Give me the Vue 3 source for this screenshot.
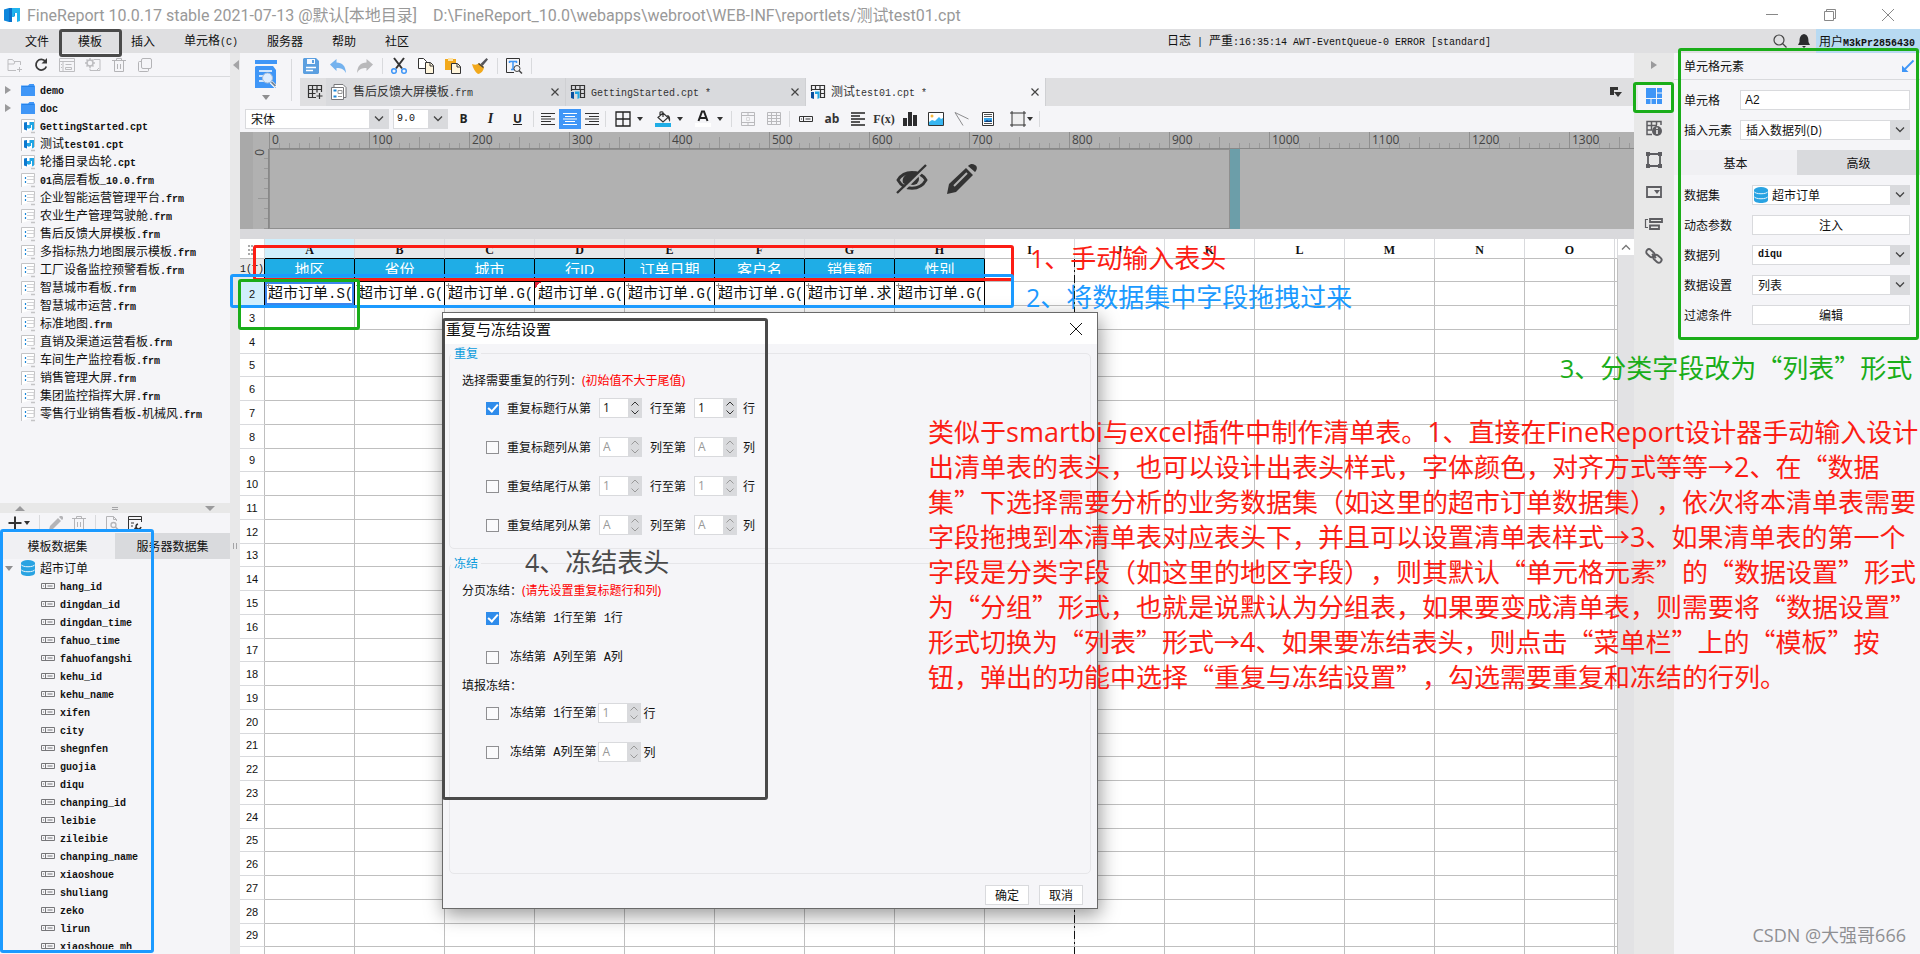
<script setup>
import { h } from 'vue'

const icons = {
  logo: ['0 0 16 16', '<path d="M0 2.500 5 1v14l-5-1.500z" fill="#0d86dc"/><path d="M5 1h3v5h3v3H8v6H5z" fill="#0a6fc9"/><path d="M8 3.500V1l8 0v13l-3 1V6h-2.500v4H8V6.500z" fill="#20b4ee"/>'],
  newFolder: ['0 0 16 14', '<path d="M9 12.500H1v-11h4.500l1.500 2h6.500V7M1 6h6l1-2.500M12.500 9v5M10 11.500h5" fill="none" stroke="#bdbdc0"/>'],
  refresh: ['0 0 14 14', '<path d="M11.500 3.500A5.300 5.300 0 1 0 12.300 8.500" fill="none" stroke="#3a3a3a" stroke-width="1.800"/><path d="M13 0v5.500H7.500z" fill="#3a3a3a"/>'],
  panel: ['0 0 16 14', '<path d="M.5.5h15v13H.5zM.5 3.500h15M4 3.500v10M2 6.500h1M2 9.500h1M6.500 6.500h6M6.500 9.500h6v2h-6z" fill="none" stroke="#bdbdc0"/>'],
  gearPanel: ['0 0 16 14', '<path d="M9 1.500h6v11H5v-2M11 13l3-3" fill="none" stroke="#bdbdc0"/><circle cx="5" cy="5" r="3" fill="none" stroke="#bdbdc0" stroke-width="1.500"/><path d="M5 0v2M5 8v2M0 5h2M8 5h2M1.500 1.500l1.500 1.500M7 7l1.500 1.500M8.500 1.500 7 3M3 7 1.500 8.500" stroke="#bdbdc0" stroke-width="1.500"/>'],
  trash: ['0 0 14 14', '<path d="M0 2.500h14M4.500 2V.5h5V2M2.500 3v10.500h9V3M5.500 6v5M8.500 6v5" fill="none" stroke="#b4b4b7"/>'],
  copies: ['0 0 14 14', '<rect x="3.500" y=".5" width="10" height="10" rx="1.500" fill="none" stroke="#b4b4b7"/><path d="M3.500 3.500h-2a1 1 0 0 0-1 1v8a1 1 0 0 0 1 1h8a1 1 0 0 0 1-1v-2" fill="none" stroke="#b4b4b7"/>'],
  folder: ['0 0 14 12', '<path d="M0 1.500h7L8.500 0H13v1.500h1V12H0z" fill="#3f96f7"/><path d="M1 2.500h12" stroke="#2583ea"/>'],
  cpt: ['0 0 14 14', '<path d="M.5 14V.5h13V10" fill="#fff" stroke="#c4c4c6"/><path d="M3 3.500 6 3v8.500l-3-1z" fill="#0d78cf"/><path d="M6 6h2.500V3H13v7.500l-2 1V6h-1v3H8.500v1L6 9z" fill="#20a5e4"/><path d="M10 13.500h4" stroke="#c4c4c6" stroke-width="1.500"/>'],
  frm: ['0 0 14 14', '<path d="M.5 14V.5h13V10" fill="#fff" stroke="#c4c4c6"/><path d="M6 3.500h7M6 6.500h7M6 10.500h7M13 3.500v7" stroke="#d2d2d4" fill="none"/><path d="M4.500 4v2M4.500 8v2" stroke="#1a86d8" stroke-width="1.200"/><path d="M10 13.500h4" stroke="#c4c4c6" stroke-width="1.500"/>'],
  db: ['0 0 14 16', '<path d="M0 3v10c0 1.700 3 3 7 3s7-1.300 7-3V3z" fill="#29a3e2"/><ellipse cx="7" cy="3" rx="7" ry="3" fill="#29a3e2"/><path d="M0 4.500c1 3 13 3 14 0M0 9.500c1 3 13 3 14 0" fill="none" stroke="#e8f4fb"/>'],
  field: ['0 0 14 6', '<path d="M.5.5h13v5H.5zM4.500.5v5M6.500 3h5M2 3h1" fill="none" stroke="#77777a"/>'],
  fieldDark: ['0 0 14 6', '<path d="M.5.5h13v5H.5zM4.500.5v5M6.500 3h5M2 3h1" fill="none" stroke="#333"/>'],
  plus: ['0 0 14 14', '<path d="M7 .5v13M.5 7h13" stroke="#333" stroke-width="2"/>'],
  pencilGray: ['0 0 14 14', '<path d="M0 14l1-4 8-8 3 3-8 8zM10 1l1-1h2l1 1v2l-1 1z" fill="#b4b4b7"/>'],
  docFind: ['0 0 14 14', '<path d="M4 13.500H1.500V.5h7l3 3V5M8.500.5v3h3" fill="none" stroke="#b4b4b7"/><circle cx="8.500" cy="9" r="2.500" fill="none" stroke="#b4b4b7" stroke-width="1.300"/><path d="M10.500 11l2.500 2.500" stroke="#b4b4b7" stroke-width="1.500"/>'],
  winGear: ['0 0 14 14', '<path d="M4 13.500H.5V.5h13V6M.5 3.500h13M3 7h3M3 10h2" fill="none" stroke="#333"/><path d="M6.500 13l2-2m1.500-3a2.500 2.500 0 1 0 3 3" fill="none" stroke="#333" stroke-width="1.500"/>'],
  preview: ['0 0 22 28', '<path d="M0 0h22v4H0z" fill="#3f96f7"/><path d="M1 6h20v22H0V7z" fill="#3f96f7"/><path d="M21 6v4l-3-4z" fill="#f5f5f8"/><path d="M4 11h13M4 16h5M4 21h5" stroke="#fff" stroke-width="1.500"/><circle cx="12.500" cy="18" r="5" fill="#dcecff" stroke="#a9bdd5"/><path d="M16 22l5 5" stroke="#fff" stroke-width="3.500"/><path d="M16.500 22l4 4" stroke="#77889a" stroke-width="1.800"/>'],
  save: ['0 0 16 16', '<path d="M1 0h12l3 3v12l-1 1H1l-1-1V1z" fill="#5b9fe0"/><path d="M4 1h8v5H4z" fill="#f5f9ff"/><path d="M9 2h2v3H9z" fill="#5b9fe0"/><path d="M3 9.500h10M3 12.500h7" stroke="#fff" stroke-width="1.500"/>'],
  undo: ['0 0 16 14', '<path d="M0 5.500 6.500 0v3.500c6 0 9 3.500 9.500 10.500-2-4-5-5-9.500-5V12z" fill="#74b2ee"/>'],
  redo: ['0 0 16 14', '<path d="M16 5.500 9.500 0v3.500C3.500 3.500.5 7 0 14c2-4 5-5 9.500-5V12z" fill="#b9b9bb"/>'],
  cut: ['0 0 16 16', '<path d="M3 0l8 10.500M13 0 5 10.500" stroke="#333" stroke-width="2"/><circle cx="3" cy="13" r="2.300" fill="none" stroke="#3f96f7" stroke-width="1.500"/><circle cx="13" cy="13" r="2.300" fill="none" stroke="#3f96f7" stroke-width="1.500"/>'],
  copy: ['0 0 16 16', '<path d="M.5.5h5l3 3v7h-8z" fill="#fff" stroke="#333"/><path d="M7.500 4.500h5l3 3v8h-8z" fill="#fff5dc" stroke="#333"/><path d="M12 5v3h3" fill="none" stroke="#333"/>'],
  paste: ['0 0 16 16', '<path d="M0 1h11v11H0z" fill="#f2a91c"/><path d="M3 0h5v3H3z" fill="#fbe3ac"/><path d="M6.500 5.500h6l3 3v7h-9z" fill="#fff5dc" stroke="#333"/><path d="M12 6v3h3" fill="none" stroke="#333"/>'],
  brush: ['0 0 16 16', '<path d="M8.500 6 14.500 0 16 1.500 10.500 8z" fill="#55555a"/><path d="M0 6c3 1 5 1 7-1l5 4c0 3-3 7-6 7C3 14 1 10 0 6z" fill="#f2a91c"/><path d="M6.500 5.500l5 4" stroke="#444" stroke-width="1.500"/>'],
  findText: ['0 0 16 16', '<path d="M8 14.500H.5V.5h13V7" fill="none" stroke="#333"/><path d="M3 3.500h8M7 3.500v8M5 11.500h4M3.500 3v2M10.500 3v2" stroke="#3f96f7" stroke-width="1.500"/><circle cx="11" cy="10.500" r="3" fill="#f5f5f8" stroke="#444"/><path d="M13 12.500l3 3" stroke="#444" stroke-width="1.500"/>'],
  gridPlus: ['0 0 14 14', '<path d="M8 12.500H.5V.5h13V7M.5 4.500h13M.5 8.500h7M4.500.5v12M9 .5v7M11.500 8v6M8.500 11h6" fill="none" stroke="#333" stroke-width="1.200"/>'],
  frmTab: ['0 0 16 16', '<path d="M3 3.500V.5h9l3 3v10h-3" fill="#fff" stroke="#77777a"/><path d="M.5 3.500h12v12H.5z" fill="#fff" stroke="#77777a"/><path d="M7 6.500h4v3H7zM7 12.500h4" fill="none" stroke="#999"/><path d="M2.500 6.500h3M2.500 12.500h3" stroke="#1a86d8" stroke-width="2"/>'],
  cptTab: ['0 0 14 14', '<path d="M.5 6V.5h13v12H9M.5 4.500h13M9 8.500h4.500M4.500.5V5M9 .5V5M9.500 5v8" fill="none" stroke="#333" stroke-width="1.200"/><path d="M0 7h3v7L0 13z" fill="#0b4f9e"/><path d="M4 6.500h4.500V13L6.500 14V9H4z" fill="#20a5e4"/>'],
  close: ['0 0 8 8', '<path d="M.5.5l7 7M7.500.5l-7 7" stroke="#444" stroke-width="1.200"/>'],
  tabList: ['0 0 12 10', '<path d="M0 0h8v3H4v5H0z" fill="#333"/><path d="M4 5h8l-4 5z" fill="#333"/>'],
  chev: ['0 0 10 6', '<path d="M1 .5l4 4 4-4" fill="none" stroke="#444" stroke-width="1.300"/>'],
  chevUp: ['0 0 10 6', '<path d="M1 5.500l4-4 4 4" fill="none" stroke="currentColor" stroke-width="1.300"/>'],
  spinUp: ['0 0 8 5', '<path d="M.5 4.500 4 1l3.500 3.500" fill="none" stroke="currentColor"/>'],
  spinDown: ['0 0 8 5', '<path d="M.5.5 4 4 7.500.5" fill="none" stroke="currentColor"/>'],
  left: ['0 0 14 12', '<path d="M0 .5h14M0 3.500h10M0 6h14M0 8.500h10M0 11.500h14" stroke="#333"/>'],
  center: ['0 0 14 12', '<path d="M0 .5h14M2 3.500h10M0 6h14M2 8.500h10M0 11.500h14" stroke="#fff"/>'],
  right: ['0 0 14 12', '<path d="M0 .5h14M4 3.500h10M0 6h14M4 8.500h10M0 11.500h14" stroke="#333"/>'],
  borders: ['0 0 16 16', '<path d="M1 1h14v14H1zM8 1v14M1 8h14" fill="none" stroke="#222" stroke-width="1.300"/>'],
  fill: ['0 0 16 16', '<path d="M3 6.500 8 2l5 4.500-5 4.500zM5 5V1.500C5 .5 8 .5 8 1.500V6" fill="none" stroke="#333" stroke-width="1.200"/><path d="M12 4c3 0 3.500 3 3 7-1-1-1.500-3-2-4z" fill="#333"/><path d="M0 12h16v4H0z" fill="#1fade6"/>'],
  fontColor: ['0 0 16 16', '<path d="M0 12h16v4H0z" fill="#fff"/><path d="M3.500 10 7 .5h2L12.500 10M5 7h6" fill="none" stroke="#222" stroke-width="2"/>'],
  merge: ['0 0 14 14', '<path d="M.5.5h13v13H.5zM.5 3.500h13M.5 10.500h13M7 .5v3M7 10.500v3" fill="none" stroke="#b9b9bc"/><path d="M5.500 5.500h3v3h-3z" fill="none" stroke="#d8d8da"/>'],
  gridGray: ['0 0 14 14', '<path d="M.5.5h13v12H.5zM.5 3.500h13M.5 6.500h13M.5 9.500h13M4.500.5v12M9.500.5v12" fill="none" stroke="#b9b9bc"/>'],
  para: ['0 0 14 14', '<path d="M0 1h14M0 4h9M0 7h14M0 10h9M0 13h14" stroke="#222" stroke-width="1.700"/>'],
  bars: ['0 0 14 14', '<path d="M0 6h4v8H0zM5 0h4v14H5zM10 3h4v11h-4z" fill="#2c2c2e"/>'],
  image: ['0 0 16 14', '<path d="M.5.5h15v13H.5z" fill="#fff" stroke="#333"/><circle cx="4" cy="4" r="1.500" fill="#f6b73c"/><path d="M1 10l3-2 3 1 4-4 2 2 2-1v7H1z" fill="#38b6f1"/>'],
  slash: ['0 0 14 14', '<path d="M0 .5 13.500 7M0 .5l8 13" fill="none" stroke="#8c8c8e"/>'],
  doc: ['0 0 12 14', '<path d="M.5.5h11v13H.5z" fill="#fff" stroke="#333"/><path d="M2 2.500h8M2 4.500h8M2 11.500h8" stroke="#555"/><path d="M2 6h8v4H2z" fill="#38a4ea"/><path d="M2 10l3-2 2 1 2-1 1 2z" fill="#123f78"/>'],
  rect: ['0 0 16 16', '<path d="M2 2h12v12H2z" fill="#efeff0"/><path d="M2 0v16M14 0v16M0 2h16M0 14h16" stroke="#333"/>'],
  eye: ['0 0 32 30', '<path d="M2 16C8 6 24 6 30 16 24 27 8 27 2 16z" fill="none" stroke="#333" stroke-width="2.800"/><path d="M7 19C4 9 21 6 21 8L12 22z" fill="#333"/><circle cx="17" cy="15" r="6" fill="#333"/><path d="M30.500 3 3 30.500" stroke="#b1b1b1" stroke-width="2.500"/><path d="M30 1 1 29" stroke="#333" stroke-width="2.400"/>'],
  pencil: ['0 0 30 30', '<path d="M0 30 2 20 19 4l7 7L9 28zM21 2c3-3 5-2 7-1s3 4 0 7z" fill="#333"/><path d="M7 22 20 9" stroke="#b1b1b1" stroke-width="2"/>'],
  cells: ['0 0 16 16', '<path d="M0 0h10v10H0zM11 0h5v4.500h-5zM11 5.500h5V10h-5zM0 11h4.500v5H0zM5.500 11H10v5H5.500zM11 11h5v5h-5z" fill="#3f96f7"/>'],
  cellInfo: ['0 0 16 16', '<path d="M6 14.500H1v-13h14V5M1 5.500h10M1 10h5M5.500 1.500v9M10.500 1.500V5" fill="none" stroke="#5d5d61" stroke-width="1.500"/><circle cx="11" cy="11" r="5" fill="#5d5d61"/><path d="M11 7.500v1.500M11 10v4" stroke="#eee" stroke-width="1.600"/>'],
  frame: ['0 0 16 16', '<path d="M2 2h12v12H2z" fill="none" stroke="#5d5d61" stroke-width="1.800"/><path d="M0 0h4v4H0zM12 0h4v4h-4zM0 12h4v4H0zM12 12h4v4h-4z" fill="#5d5d61"/>'],
  widget: ['0 0 16 12', '<path d="M1 1h14v10H1z" fill="none" stroke="#5d5d61" stroke-width="1.800"/><path d="M8 4h6l-3 4z" fill="#5d5d61"/>'],
  tree: ['0 0 18 12', '<path d="M3 1.500H.5v8H3" fill="none" stroke="#5d5d61" stroke-width="1.200"/><path d="M5 1h12v3H5zM5 7.500h9V11H5z" fill="none" stroke="#5d5d61" stroke-width="1.800"/>'],
  link: ['0 0 16 16', '<g fill="none" stroke="#5d5d61" stroke-width="1.900"><rect x="0" y="2.500" width="9" height="5.500" rx="2.700" transform="rotate(42 4.500 5)"/><rect x="7" y="8" width="9" height="5.500" rx="2.700" transform="rotate(42 11.500 10.700)"/><path d="M6 6l4 4"/></g>'],
  search: ['0 0 14 14', '<circle cx="6" cy="6" r="5" fill="none" stroke="#444" stroke-width="1.200"/><path d="M9.500 9.500l4 4" stroke="#444" stroke-width="1.300"/>'],
  bell: ['0 0 12 14', '<path d="M6 0c4 1 4.500 4 4.500 8L12 11H0l1.500-3C1.500 4 2 1 6 0zM4 12h4l-2 2z" fill="#2c2c2e"/>'],
  minimize: ['0 0 12 12', '<path d="M0 5.500h12" stroke="#888"/>'],
  restore: ['0 0 12 12', '<path d="M.5 2.500h9v9h-9zM2.500 2V.5h9v9H10" fill="none" stroke="#888"/>'],
  closeWin: ['0 0 12 12', '<path d="M0 0l12 12M12 0 0 12" stroke="#888"/>'],
  closeDlg: ['0 0 12 12', '<path d="M0 0l12 12M12 0 0 12" stroke="#111"/>'],
  pin: ['0 0 12 12', '<path d="M11.500.5 3 9" stroke="#3f96f7" stroke-width="1.800"/><path d="M0 12V5.500L6.500 12z" fill="#3f96f7"/>'],
  dots: ['0 0 8 10', '<path d="M0 1h2M3 1h2M6 1h2M0 5h2M3 5h2M6 5h2M0 9h2M3 9h2M6 9h2" stroke="#aaa" stroke-width="2"/>'],
  triR: ['0 0 6 8', '<path d="M0 0l6 4-6 4z" fill="#9a9a9c"/>'],
  triL: ['0 0 6 10', '<path d="M6 0 0 5l6 5z" fill="#a4a4a6"/>'],
  triD: ['0 0 8 5', '<path d="M0 0h8L4 5z" fill="#8e8e90"/>'],
  triU: ['0 0 10 5', '<path d="M0 5h10L5 0z" fill="#9a9a9c"/>'],
  triDown: ['0 0 10 5', '<path d="M0 0h10L5 5z" fill="#9a9a9c"/>'],
  drop: ['0 0 6 4', '<path d="M0 0h6L3 4z" fill="#333"/>'],
}
const Icon = (p) => h('svg', { class: 'icon', viewBox: icons[p.n][0], width: icons[p.n][0].split(' ')[2], height: icons[p.n][0].split(' ')[3], innerHTML: icons[p.n][1], 'aria-hidden': 'true' })
Icon.props = ['n']

// Sets ASCII runs in the half-width face and everything else in the CJK face.
const Mix = (p) => h('span', { class: 'mix' }, p.s.split(/([ -~]+)/).filter(Boolean).map((x) => (/^[ -~]/.test(x) ? h('span', { class: 'lt' }, x) : x)))
Mix.props = ['s']

const menus = ['文件', '模板', '插入', '单元格(C)', '服务器', '帮助', '社区']
const files = ['GettingStarted.cpt', '测试test01.cpt', '轮播目录齿轮.cpt', '01高层看板_10.0.frm', '企业智能运营管理平台.frm', '农业生产管理驾驶舱.frm', '售后反馈大屏模板.frm', '多指标热力地图展示模板.frm', '工厂设备监控预警看板.frm', '智慧城市看板.frm', '智慧城市运营.frm', '标准地图.frm', '直销及渠道运营看板.frm', '车间生产监控看板.frm', '销售管理大屏.frm', '集团监控指挥大屏.frm', '零售行业销售看板-机械风.frm']
const fields = ['hang_id', 'dingdan_id', 'dingdan_time', 'fahuo_time', 'fahuofangshi', 'kehu_id', 'kehu_name', 'xifen', 'city', 'shegnfen', 'guojia', 'diqu', 'chanping_id', 'leibie', 'zileibie', 'chanping_name', 'xiaoshoue', 'shuliang', 'zeko', 'lirun', 'xiaoshoue_mh']
const tabs = [
  { i: 'frmTab', t: '售后反馈大屏模板.frm' },
  { i: 'cptTab', t: 'GettingStarted.cpt *' },
  { i: 'cptTab', t: '测试test01.cpt *', on: true },
]
const tools = [['save', 'undo', 'redo'], ['cut', 'copy', 'paste', 'brush'], ['findText']]
const cols = 'ABCDEFGHIJKLMNO'.split('')
const heads = ['地区', '省份', '城市', '行ID', '订单日期', '客户名', '销售额', '性别']
const exprs = ['S(', 'G(', 'G(', 'G(', 'G(', 'G(', '求', 'G(']
const repeats = [
  { a: '重复标题行从第', u: '行', v: '1', on: true },
  { a: '重复标题列从第', u: '列', v: 'A' },
  { a: '重复结尾行从第', u: '行', v: '1' },
  { a: '重复结尾列从第', u: '列', v: 'A' },
]
const side = ['cells', 'cellInfo', 'frame', 'widget', 'tree', 'link']
const note = ['类似于smartbi与excel插件中制作清单表。1、直接在FineReport设计器手动输入设计', '出清单表的表头，也可以设计出表头样式，字体颜色，对齐方式等等→2、在“数据', '集”下选择需要分析的业务数据集（如这里的超市订单数据集），依次将本清单表需要', '字段拖拽到本清单表对应表头下，并且可以设置清单表样式→3、如果清单表的第一个', '字段是分类字段（如这里的地区字段），则其默认“单元格元素”的“数据设置”形式', '为“分组”形式，也就是说默认为分组表，如果要变成清单表，则需要将“数据设置”', '形式切换为“列表”形式→4、如果要冻结表头，则点击“菜单栏”上的“模板”按', '钮，弹出的功能中选择“重复与冻结设置”，勾选需要重复和冻结的行列。']
</script>

<template>
  <div class="app">
    <header class="titlebar">
      <Icon n="logo" />
      <span class="title"><Mix s="FineReport 10.0.17 stable 2021-07-13 @默认[本地目录]" /></span>
      <span class="title path"><Mix s="D:\FineReport_10.0\webapps\webroot\WEB-INF\reportlets/测试test01.cpt" /></span>
      <div class="winbtns">
        <button aria-label="最小化"><Icon n="minimize" /></button>
        <button aria-label="还原"><Icon n="restore" /></button>
        <button aria-label="关闭"><Icon n="closeWin" /></button>
      </div>
    </header>

    <nav class="menubar">
      <button v-for="m in menus" :key="m"><Mix :s="m" /></button>
      <div class="log"><Mix s="日志 | 严重:16:35:14 AWT-EventQueue-0 ERROR [standard]" /></div>
      <button aria-label="搜索"><Icon n="search" /></button>
      <button class="bell" aria-label="通知"><Icon n="bell" /></button>
      <span class="user"><Mix s="用户M3kPr2856430" /></span>
    </nav>

    <div class="body">
      <aside class="left">
        <div class="lbar top">
          <button v-for="i in ['newFolder', 'refresh', 'panel', 'gearPanel', 'trash', 'copies']" :key="i" :aria-label="i"><Icon :n="i" /></button>
        </div>
        <ul class="tree files">
          <li v-for="d in ['demo', 'doc']" :key="d"><span class="tw"><Icon n="triR" /></span><span class="ti"><Icon n="folder" /></span><Mix :s="d" /></li>
          <li v-for="f in files" :key="f"><span class="tw"></span><span class="ti"><Icon :n="f.endsWith('cpt') ? 'cpt' : 'frm'" /></span><Mix :s="f" /></li>
        </ul>
        <div class="hsplit"><Icon n="triU" /><span class="grip"></span><Icon n="triDown" /></div>
        <div class="lbar">
          <button aria-label="添加" class="add"><Icon n="plus" /><Icon n="drop" /></button>
          <i class="vsep"></i>
          <button aria-label="编辑数据集"><Icon n="pencilGray" /></button>
          <button aria-label="删除"><Icon n="trash" /></button>
          <i class="vsep"></i>
          <button aria-label="预览"><Icon n="docFind" /></button>
          <button aria-label="连接"><Icon n="winGear" /></button>
        </div>
        <div class="switch"><button class="on">模板数据集</button><button>服务器数据集</button></div>
        <ul class="tree data">
          <li><span class="tw"><Icon n="triD" /></span><span class="ti"><Icon n="db" /></span>超市订单</li>
          <li v-for="f in fields" :key="f" class="field"><Icon n="field" /><Mix :s="f" /></li>
        </ul>
      </aside>

      <div class="vsplit"><Icon n="triL" /><span class="vgrip"></span></div>

      <main class="center">
        <div class="tophalf">
          <button class="preview" aria-label="预览"><Icon n="preview" /><Icon n="triD" /></button>
          <div class="topright">
            <div class="tools">
              <div v-for="(g, k) in tools" :key="k" class="grp"><button v-for="i in g" :key="i" :aria-label="i"><Icon :n="i" /></button></div>
            </div>
            <div class="tabs">
              <button class="newtab" aria-label="新建"><Icon n="gridPlus" /></button>
              <div v-for="t in tabs" :key="t.t" class="tab" :class="{ on: t.on }">
                <Icon :n="t.i" /><Mix :s="t.t" /><button aria-label="关闭标签"><Icon n="close" /></button>
              </div>
              <button class="tablist" aria-label="标签列表"><Icon n="tabList" /></button>
            </div>
          </div>
        </div>

        <div class="format">
          <div class="combo fontname"><select aria-label="字体"><option>宋体</option></select><span><Icon n="chev" /></span></div>
          <div class="combo fontsize"><select aria-label="字号"><option>9.0</option></select><span><Icon n="chev" /></span></div>
          <button class="b"><b>B</b></button><button class="b"><i>I</i></button><button class="b"><u>U</u></button>
          <i class="vsep"></i>
          <button class="al" aria-label="左对齐"><Icon n="left" /></button>
          <button class="al on" aria-label="居中"><Icon n="center" /></button>
          <button class="al" aria-label="右对齐"><Icon n="right" /></button>
          <i class="vsep"></i>
          <button class="dd" aria-label="边框"><Icon n="borders" /><Icon n="drop" /></button>
          <button class="dd" aria-label="填充"><Icon n="fill" /><Icon n="drop" /></button>
          <button class="dd" aria-label="字体颜色"><Icon n="fontColor" /><Icon n="drop" /></button>
          <i class="vsep"></i>
          <button v-for="i in ['merge', 'gridGray']" :key="i" class="ic" :aria-label="i"><Icon :n="i" /></button>
          <i class="vsep"></i>
          <button class="ic" aria-label="数据列"><Icon n="fieldDark" /></button>
          <button class="ic ab">ab</button>
          <button class="ic" aria-label="富文本"><Icon n="para" /></button>
          <button class="ic fx">F(x)</button>
          <button v-for="i in ['bars', 'image', 'slash', 'doc']" :key="i" class="ic" :aria-label="i"><Icon :n="i" /></button>
          <button class="ic last" aria-label="悬浮元素"><Icon n="rect" /><Icon n="drop" /></button>
          <i class="vsep"></i>
        </div>

        <section class="canvas">
          <div class="hruler"><span v-for="n in 14" :key="n">{{ (n - 1) * 100 }}</span></div>
          <div class="crow">
            <div class="vruler"><span>0</span></div>
            <div class="paper">
              <button aria-label="隐藏"><Icon n="eye" /></button>
              <button aria-label="编辑"><Icon n="pencil" /></button>
            </div>
            <div class="handle"></div>
          </div>
        </section>

        <div class="sheetwrap">
          <div class="sheet">
            <table>
              <colgroup><col class="c0" /><col v-for="c in cols" :key="c" class="c" /><col /></colgroup>
              <thead>
                <tr><th><Icon n="dots" /></th><th v-for="(c, i) in cols" :key="c" :class="{ used: i < 8, sel: i === 0 }">{{ c }}</th><th></th></tr>
              </thead>
              <tbody>
                <tr class="r1"><th>1(T)</th><td v-for="(c, i) in cols" :key="c"><div v-if="i < 8"><Mix :s="heads[i]" /></div></td><td></td></tr>
                <tr class="r2"><th>2</th><td v-for="(c, i) in cols" :key="c"><div v-if="i < 8" :class="{ red: i === 3 }"><Mix :s="'超市订单.' + exprs[i]" /></div></td><td></td></tr>
                <tr v-for="r in 28" :key="r"><th>{{ r + 2 }}</th><td v-for="c in cols" :key="c"></td><td></td></tr>
              </tbody>
            </table>
            <div class="pagebreak"></div>
          </div>
          <div class="scroll"><button aria-label="向上滚动"><Icon n="chevUp" /></button></div>
        </div>
      </main>

      <div class="strip">
        <Icon n="triR" />
        <button v-for="(s, i) in side" :key="s" :class="{ on: i === 0 }" :aria-label="s"><Icon :n="s" /></button>
      </div>

      <aside class="props">
        <div class="phead"><span>单元格元素</span><Icon n="pin" /></div>
        <div class="prow wide"><label for="cell">单元格</label><input id="cell" class="box" value="A2" /></div>
        <div class="prow wide"><label for="ins">插入元素</label><div class="combo"><select id="ins"><option>插入数据列(D)</option></select><span><Icon n="chev" /></span></div></div>
        <div class="switch"><button class="on">基本</button><button>高级</button></div>
        <div class="prow"><label for="ds">数据集</label><div class="combo"><Icon n="db" /><select id="ds"><option>超市订单</option></select><span><Icon n="chev" /></span></div></div>
        <div class="prow"><label for="dyn">动态参数</label><button id="dyn" class="box">注入</button></div>
        <div class="prow"><label for="dc">数据列</label><div class="combo mono"><select id="dc"><option>diqu</option></select><span><Icon n="chev" /></span></div></div>
        <div class="prow"><label for="set">数据设置</label><div class="combo"><select id="set"><option>列表</option></select><span><Icon n="chev" /></span></div></div>
        <div class="prow"><label for="flt">过滤条件</label><button id="flt" class="box">编辑</button></div>
      </aside>
    </div>

    <section class="dialog" role="dialog" aria-label="重复与冻结设置">
      <div class="dhead"><span>重复与冻结设置</span><button aria-label="关闭"><Icon n="closeDlg" /></button></div>
      <div class="dbody">
        <fieldset class="f1">
          <legend>重复</legend>
          <p>选择需要重复的行列：<em>(初始值不大于尾值)</em></p>
          <div v-for="(r, i) in repeats" :key="i" class="drow">
            <input :id="'rep' + i" type="checkbox" :checked="r.on" />
            <label :for="'rep' + i">{{ r.a }}</label>
            <div class="spin" :class="{ off: !r.on }"><input :value="r.v" aria-label="起始" :disabled="!r.on" /><span><button aria-label="增"><Icon n="spinUp" /></button><button aria-label="减"><Icon n="spinDown" /></button></span></div>
            <span class="mid">{{ r.u }}至第</span>
            <div class="spin" :class="{ off: !r.on }"><input :value="r.v" aria-label="结束" :disabled="!r.on" /><span><button aria-label="增"><Icon n="spinUp" /></button><button aria-label="减"><Icon n="spinDown" /></button></span></div>
            <span class="unit">{{ r.u }}</span>
          </div>
        </fieldset>
        <fieldset class="f2">
          <legend>冻结</legend>
          <p>分页冻结：<em>(请先设置重复标题行和列)</em></p>
          <div class="drow frz"><input id="p1" type="checkbox" checked /><label for="p1"><Mix s="冻结第 1行至第 1行" /></label></div>
          <div class="drow frz"><input id="p2" type="checkbox" /><label for="p2"><Mix s="冻结第 A列至第 A列" /></label></div>
          <p class="sub">填报冻结：</p>
          <div v-for="(r, i) in [['1', '行'], ['A', '列']]" :key="i" class="drow frz">
            <input :id="'w' + i" type="checkbox" /><label :for="'w' + i"><Mix :s="'冻结第 ' + r[0] + r[1] + '至第'" /></label>
            <div class="spin off"><input :value="r[0]" aria-label="结束" disabled /><span><button aria-label="增"><Icon n="spinUp" /></button><button aria-label="减"><Icon n="spinDown" /></button></span></div>
            <span class="end">{{ r[1] }}</span>
          </div>
        </fieldset>
        <div class="dfoot"><button class="box">确定</button><button class="box">取消</button></div>
      </div>
    </section>

    <div class="marks">
      <i class="mark m-menu"></i><i class="mark m-red"></i><i class="mark m-blue"></i><i class="mark m-cell"></i>
      <i class="mark m-data"></i><i class="mark m-dialog"></i><i class="mark m-strip"></i><i class="mark m-props"></i>
      <p class="say s1"><Mix s="1、手动输入表头" /></p>
      <p class="say s2"><Mix s="2、将数据集中字段拖拽过来" /></p>
      <p class="say s3"><Mix s="3、分类字段改为“列表”形式" /></p>
      <p class="say s4"><Mix s="4、冻结表头" /></p>
      <div class="say s5"><p v-for="l in note" :key="l"><Mix :s="l" /></p></div>
      <p class="water"><Mix s="CSDN @大强哥666" /></p>
    </div>
  </div>
</template>

<style>
html, body { overflow: hidden; }
.icon { display: block; flex: none; overflow: visible; }
.mix { white-space: pre; }
.lt { font-family: var(--lf); font-size: var(--ls); font-weight: var(--lw); }
</style>

<style scoped>
.app {
  --lf: "Liberation Mono", monospace; --ls: 10px; --lw: 400;
  position: relative; height: 100vh; display: flex; flex-direction: column; overflow: hidden;
  background: #f5f5f8; color: #111; font: 12px/18px "Noto Sans CJK SC", sans-serif; text-spacing-trim: space-all;
}
.app * { box-sizing: border-box; }
button { display: flex; align-items: center; justify-content: center; padding: 0; border: 0; background: none; color: inherit; font: inherit; }
input, select { min-width: 0; margin: 0; border: 0; padding: 0; background: none; color: inherit; font: inherit; border-radius: 0; }
p, ul { margin: 0; padding: 0; list-style: none; }

.titlebar { flex: none; height: 29px; display: flex; align-items: center; padding-left: 4px; background: #fff; }
.title { --lf: Roboto, sans-serif; --ls: 16px; margin-left: 7px; color: #999; font-size: 16px; line-height: 28px; white-space: nowrap; }
.path { margin-left: 16px; }
.winbtns { display: flex; gap: 46px; margin-left: auto; padding-right: 26px; }
.menubar { flex: none; height: 24px; display: flex; align-items: center; gap: 29px; padding-left: 25px; background: #dfdfe1; white-space: nowrap; }
.log { margin: 0 253px 0 auto; }
.bell { margin-left: -18px; }
.user { width: 104px; height: 24px; margin-left: -23px; padding-left: 3px; background: #b8daf2; line-height: 24px; --lw: 700; }

.body { flex: 1; min-height: 0; display: grid; grid-template-columns: 230px 10px minmax(0, 1fr) 40px 246px; }
.left { display: flex; flex-direction: column; min-height: 0; }
.lbar { flex: none; height: 20px; display: flex; align-items: center; gap: 9px; padding-left: 8px; }
.lbar.top { height: 24px; gap: 0; border-bottom: 1px solid #d9dadd; padding: 1px 0 0 2px; }
.lbar.top button { width: 26px; }
.add { gap: 2px; }
.vsep { flex: none; width: 1px; height: 16px; background: #d9dadd; }
.tree { --lw: 700; white-space: nowrap; overflow: hidden; }
.tree li { height: 18px; display: flex; align-items: center; }
.files { flex: 1; padding-top: 4px; }
.tw { width: 21px; padding-left: 5px; }
.ti { width: 19px; }
.hsplit { flex: none; height: 10px; display: flex; align-items: center; justify-content: space-between; padding: 0 15px; background: #e8e8e8; }
.grip { width: 6px; height: 3px; border: solid #a4a4a6; border-width: 1px 0; }
.switch { flex: none; display: flex; height: 26px; }
.switch button { flex: 1; background: #d9dadd; }
.switch .on { background: #f0f0f3; }
.data { flex: none; height: 390px; margin-bottom: 5px; }
.field { gap: 5px; padding-left: 41px; }
.vsplit { background: #e8e8e9; padding: 7px 3px 0; display: flex; flex-direction: column; justify-content: space-between; }
.vgrip { width: 4px; height: 6px; margin-bottom: 405px; border: solid #a4a4a6; border-width: 0 1px; }

.center { display: flex; flex-direction: column; min-width: 0; min-height: 0; }
.tophalf { flex: none; display: flex; height: 53px; }
.preview { flex: none; width: 52px; height: 42px; margin: 6px 8px 0 0; padding: 0 14px 0 15px; flex-direction: column; gap: 7px; border-right: 1px solid #d9dadd; }
.topright { flex: 1; min-width: 0; }
.tools { height: 25px; display: flex; align-items: center; padding-left: 3px; }
.grp { display: flex; align-items: center; gap: 11px; height: 16px; padding-right: 9px; margin-right: 8px; border-right: 1px solid #d9dadd; }
.tabs { display: flex; height: 28px; background: #dfdfe1; color: #333; }
.newtab { width: 26px; padding-left: 4px; }
.tab { flex: none; width: 240px; display: flex; align-items: center; gap: 6px; padding: 0 6px 0 5px; background: #d9dadd; border-right: 1px solid #cfd0d3; }
.tab button { margin-left: auto; }
.tab.on { background: #f5f5f8; }
.tablist { margin-left: auto; padding-right: 12px; }

.format { flex: none; height: 26px; display: flex; align-items: center; padding-left: 5px; }
.combo { display: flex; align-items: center; height: 20px; border: 1px solid #d9dadd; background: #fff; }
.combo select { flex: 1; height: 18px; padding-left: 5px; appearance: none; line-height: 18px; outline: 0; }
.combo > span { flex: none; width: 19px; height: 18px; display: grid; place-items: center; background: #d9dadd; }
.fontname { width: 144px; }
.fontsize { width: 55px; margin: 0 2px 0 4px; }
.fontsize select { padding-left: 3px; font: 10px/18px "Liberation Mono", monospace; }
.b { width: 27px; font: 12px/18px "DejaVu Sans", sans-serif; color: #222; }
.b i { font-family: "Liberation Serif", serif; font-size: 14px; font-weight: 700; }
.b u, .b b { font-family: "Open Sans", sans-serif; font-weight: 700; }
.al { width: 22px; height: 20px; }
.format .vsep { margin: 0 3px 0 2px; }
.al.on { background: #3f96f7; }
.dd { width: 40px; gap: 6px; }
.ic { width: 26px; }
.ab { font: 700 12px/18px "Open Sans", sans-serif; color: #333; }
.fx { font: 700 12px/18px "Liberation Serif", serif; color: #333; }
.last { width: 36px; gap: 1px; padding-left: 4px; }

.canvas { flex: none; height: 97px; background: #b1b1b1; border-left: 13px solid #a9a9a9; display: flex; flex-direction: column; }
.hruler { flex: none; height: 17px; margin-left: 16px; display: flex; overflow: hidden; border-bottom: 1px solid #888; font: 12px/15px "Open Sans", sans-serif; color: #444; }
.hruler span {
  flex: none; width: 100px; padding-left: 2px; border-left: 1px solid #8f8f8f;
  background: linear-gradient(#969696, #969696) 49px 5px / 1px 12px no-repeat, repeating-linear-gradient(90deg, transparent 0 9px, #999 9px 10px) 0 11px / 100% 5px no-repeat;
}
.crow { flex: 1; display: flex; }
.vruler { width: 16px; border-right: 1px solid #888; font: 12px/12px "Open Sans", sans-serif; color: #444;
  background: linear-gradient(#969696, #969696) 5px 49px / 11px 1px no-repeat, repeating-linear-gradient(transparent 0 9px, #999 9px 10px) 11px 0 / 5px 100% no-repeat; }
.vruler span { display: block; width: 12px; height: 9px; writing-mode: vertical-rl; }
.paper { flex: none; width: 961px; display: flex; justify-content: flex-end; gap: 19px; padding: 14px 252px 0 0; border: 1px solid #8f8f8f; }
.paper button { height: 30px; }
.handle { width: 10px; background: #6c9ea9; }

.sheetwrap { flex: 1; min-height: 0; display: flex; border-top: 10px solid #d9d9dc; }
.sheet { position: relative; flex: 1; min-width: 0; overflow: hidden; background: #fff; }
table { width: 100%; table-layout: fixed; border-spacing: 0; }
.c0 { width: 25px; }
.c { width: 90px; }
th, td { padding: 0; height: 24px; border: solid #bfbfbf; border-width: 0 1px 1px 0; font-weight: 400; overflow: hidden; line-height: 16px; }
thead th { height: 20px; padding-top: 3px; font: 700 12px/16px "Liberation Serif", serif; border-color: #d9dadd #d9dadd #bfbfbf; }
thead th .icon { margin: 0 auto; }
thead .used { background: #e8e8e9; border-bottom-color: #000; }
thead .sel { background: #d0effc; }
tbody th { font: 11px/16px "Liberation Sans", sans-serif; border-bottom-color: #d9dadd; }
tbody tr:nth-child(4n + 1) > * { height: 23px; }
.r1 th { background: #e8e8e9; font: 10px/16px "Liberation Mono", monospace; white-space: nowrap; }
.r2 th { background: #d0effc; }
.r1 th, .r2 th { border-right-color: #000; }
.r1 td:nth-child(-n + 9), .r2 td:nth-child(-n + 9) { border-color: #000; }
.r1 td:nth-child(-n + 9) { background: #1fade6; color: #fff; text-align: center; vertical-align: top; font-size: 15px; --ls: 14px; --lf: "Liberation Sans"; }
.r1 div { height: 15px; line-height: 20px; overflow: hidden; }
.r2 div { height: 23px; padding-left: 3px; font-size: 15px; line-height: 20px; --ls: 14px; white-space: nowrap; overflow: hidden; background: linear-gradient(#888, #888) 3px 1px / 1px 5px no-repeat, linear-gradient(#888, #888) 1px 3px / 5px 1px no-repeat; }
.r2 .red { background: linear-gradient(135deg, #e0263c 50%, transparent 50%) 0 0 / 6px 6px no-repeat; }
.r2 td:nth-child(2) { box-shadow: inset 0 0 0 2px #3b86ee; }
.pagebreak { position: absolute; left: 834px; top: 20px; bottom: 0; width: 1px; background: repeating-linear-gradient(#111 0 8px, transparent 8px 11px, #111 11px 13px, transparent 13px 16px); }
.scroll { flex: none; width: 16px; background: #e2e2e4; color: #777; }
.scroll button { width: 16px; height: 16px; background: #fff; }

.strip { background: #e8e8e8; display: flex; flex-direction: column; align-items: center; padding-top: 8px; }
.strip > .icon { margin-bottom: 11px; }
.strip button { width: 36px; height: 32px; padding-right: 4px; align-self: flex-end; }
.strip .on { background: linear-gradient(#f5f5f8, #f5f5f8) 0 3px / 100% 27px no-repeat; }

.props { min-width: 0; }
.phead { height: 27px; display: flex; align-items: center; justify-content: space-between; padding: 0 6px 0 10px; border-bottom: 1px solid #d9dadd; }
.prow { display: grid; grid-template-columns: 68px minmax(0, 1fr); align-items: center; height: 20px; margin: 10px 10px 0; }
.prow.wide { grid-template-columns: 56px minmax(0, 1fr); }
.props .switch { height: 25px; margin-top: 10px; }
.box { width: 100%; height: 20px; border: 1px solid #d9dadd; background: #fff; }
input.box { padding-left: 4px; font: 12px/18px "Liberation Sans", sans-serif; }
.combo .icon + select { padding-left: 4px; }
.combo > .icon:first-child { margin-left: 1px; }
.mono select { font: 700 10px/18px "Liberation Mono", monospace; }

.dialog { position: absolute; left: 442px; top: 312px; width: 656px; border: 1px solid #6a6a6a; background: #f5f5f8; box-shadow: 2px 6px 18px rgba(0, 0, 0, .4); }
.dhead { height: 31px; display: flex; align-items: center; justify-content: space-between; padding: 0 15px 0 3px; background: #fff; font-size: 15px; line-height: 30px; }
.dbody { padding: 0 6px 3px; }
fieldset { margin: 0; min-width: 0; padding: 0 12px; border: 1px solid #e6e6e9; border-radius: 5px; }
legend { margin-left: -11px; padding: 0 3px; color: #0a9bdc; line-height: 18px; }
.f1 { height: 205px; }
.f2 { height: 320px; margin-top: 5px; }
.f1 p, .f2 p { height: 18px; margin-top: 9px; }
.f2 .sub { margin-bottom: 9px; }
em { font: 12px/18px "Noto Sans", "Noto Sans CJK SC", sans-serif; color: #f00; }
.drow { display: flex; align-items: center; height: 20px; margin-left: 24px; }
.f1 .drow { margin-top: 9px; }
.f1 .drow + .drow, .drow + .drow { margin-top: 19px; }
.f2 p:not(.sub) + .drow { margin-top: 9px; }
.drow > input { flex: none; appearance: none; width: 13px; height: 13px; border: 1px solid #8f8f92; background: #fafafc; }
.drow > input:checked { border-color: #2f8ceb; background: #2f8ceb; display: grid; place-items: center; }
.drow > input:checked::before { content: ""; width: 8px; height: 4px; margin-top: -2px; border: solid #fff; border-width: 0 0 2px 2px; transform: rotate(-48deg); }
.drow label { margin: 0 8px; }
.frz { --ls: 12px; }
.frz label { margin: 0 2px 0 11px; }
.mid { margin: 0 8px; }
.unit { margin-left: 6px; }
.end { margin-left: 2px; }
.spin { flex: none; width: 43px; height: 20px; display: flex; border: 1px solid #d9dadd; background: #fff; }
.spin input { flex: 1; padding-left: 3px; font: 12px/18px "Open Sans", sans-serif; }
.spin span { width: 13px; display: flex; flex-direction: column; background: #d9dadd; color: #333; }
.spin button { flex: 1; }
.off, .off span { color: #999; }
.dfoot { display: flex; justify-content: flex-end; gap: 10px; padding: 11px 8px 0; }
.dfoot .box { width: 44px; }

.marks { position: absolute; inset: 0; pointer-events: none; overflow: hidden; }
.mark { position: absolute; border: 3px solid; border-radius: 3px; }
.m-menu { left: 59px; top: 29px; width: 63px; height: 28px; color: #4a4a4a; }
.m-red { left: 253px; top: 245px; width: 761px; height: 36px; color: #fc1d14; }
.m-blue { left: 230px; top: 274px; width: 784px; height: 34px; color: #1b9aff; }
.m-cell { left: 238px; top: 279px; width: 122px; height: 51px; color: #1aad19; }
.m-data { left: 0; top: 529px; width: 154px; height: 424px; color: #1b9aff; }
.m-dialog { left: 442px; top: 318px; width: 326px; height: 482px; color: #4a4a4a; }
.m-strip { right: 246px; top: 82px; width: 41px; height: 31px; color: #1aad19; }
.m-props { right: 1px; top: 48px; width: 241px; height: 292px; color: #1aad19; }
.say { --lf: "Open Sans", sans-serif; --ls: 25px; position: absolute; font-size: 26px; line-height: 35px; white-space: nowrap; }
.s1 { left: 1030px; top: 239px; color: #fc1d14; }
.s2 { left: 1026px; top: 278px; color: #1b9aff; }
.s3 { left: 1560px; top: 349px; color: #1aad19; }
.s4 { left: 525px; top: 543px; color: #4a4a4a; }
.s5 { --ls: 27px; left: 928px; top: 413px; color: #fc1d14; }
.s5 p { height: 35px; }
.water { --lf: "Open Sans", sans-serif; --ls: 18px; position: absolute; right: 14px; bottom: 4px; font-size: 18px; line-height: 30px; color: #8f8f92; white-space: nowrap; }
</style>
